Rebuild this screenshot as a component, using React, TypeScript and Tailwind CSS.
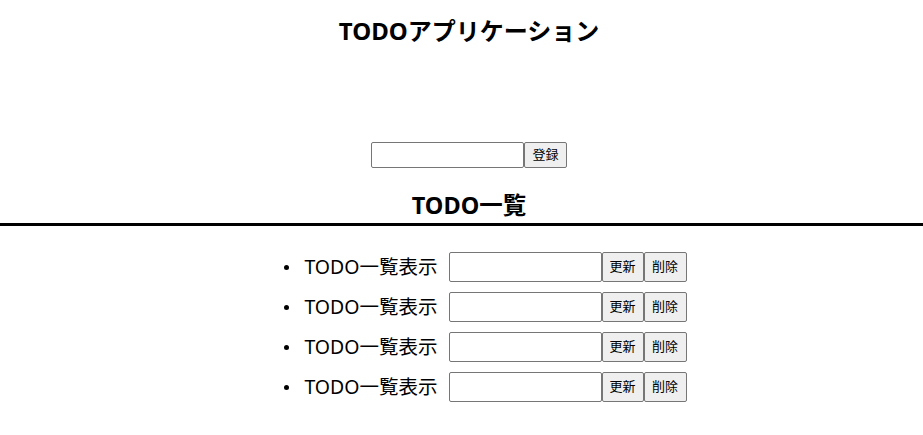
import React from 'react';

const font = { fontFamily: '"Noto Sans", "Noto Sans CJK JP", sans-serif' };

const App: React.FC = () => {
  const todos = ['TODO一覧表示', 'TODO一覧表示', 'TODO一覧表示', 'TODO一覧表示'];

  return (
    <div className="w-[923px] h-[435px] bg-white text-black" style={font}>
      <h1 className="pt-[16px] pl-[15px] h-[46px] text-center text-[24px] font-bold leading-[30px]">TODOアプリケーション</h1>
      <div className="mt-[96px] flex justify-center pl-[15px]">
        <input className="w-[153px] h-[26px] border border-[#767676] rounded-[2px] px-1 text-[13px]" />
        <button className="h-[26px] w-[43px] border border-[#767676] rounded-[2px] bg-[#efefef] text-[13px]">登録</button>
      </div>
      <h2 className="mt-[22px] pl-[15px] text-center text-[23.5px] font-bold leading-[30px]">TODO一覧</h2>
      <div className="mt-[3px] h-[3px] bg-black" />
      <ul className="mt-[26px] pl-[48px] flex flex-col items-center gap-[10px]">
        {todos.map((t, i) => (
          <li key={i} className="flex items-center h-[30px]">
            <span className="w-[5px] h-[5px] rounded-full bg-black mr-[15px]" />
            <span className="text-[19.5px] leading-[30px] mr-[11px]">{t}</span>
            <input className="w-[153px] h-[30px] border border-[#767676] rounded-[2px] px-1 text-[13px]" />
            <button className="h-[30px] w-[42px] border border-[#767676] rounded-[2px] bg-[#efefef] text-[13px]">更新</button>
            <button className="h-[30px] w-[43px] border border-[#767676] rounded-[2px] bg-[#efefef] text-[13px]">削除</button>
          </li>
        ))}
      </ul>
    </div>
  );
};

export default App;
